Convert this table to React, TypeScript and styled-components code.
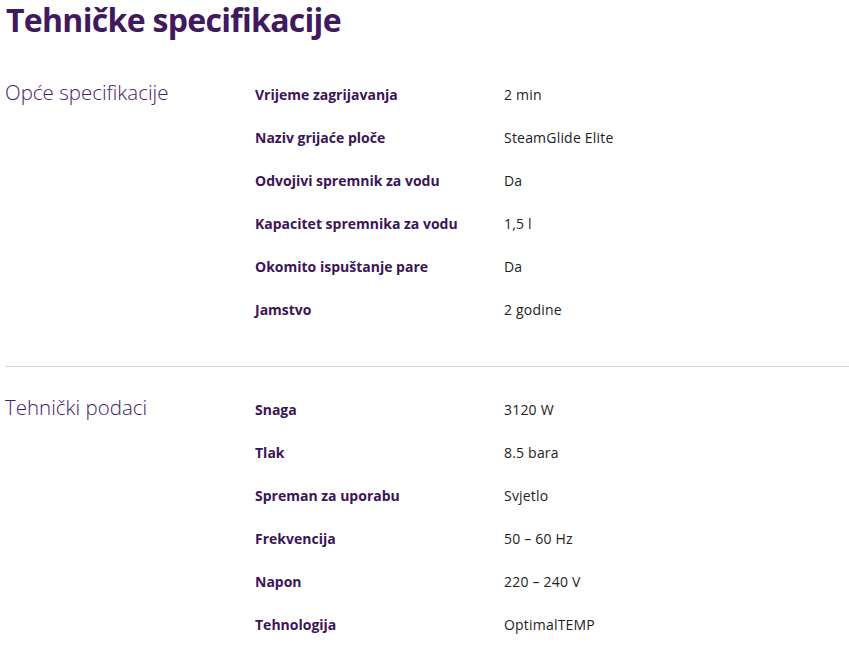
import React from 'react';
import styled, { createGlobalStyle } from 'styled-components';

const GlobalStyle = createGlobalStyle`
  html, body {
    margin: 0;
    padding: 0;
    background: #fff;
  }
  body {
    font-family: "Open Sans", "Noto Sans", sans-serif;
  }
`;

const Page = styled.div`
  padding: 0 0 0 5px;
`;

const Title = styled.h1`
  margin: 0 0 12px;
  padding-left: 1px;
  font-size: 32px;
  line-height: 40px;
  font-weight: 700;
  letter-spacing: -0.7px;
  color: #411a5e;
`;

const Section = styled.section<{ $divider?: boolean }>`
  display: grid;
  grid-template-columns: 250px 249px 1fr;
  padding: ${(p) => (p.$divider ? '21px 0 0' : '21px 0 35px')};
  border-top: ${(p) => (p.$divider ? '1px solid #d6d6d6' : 'none')};
`;

const SectionName = styled.h2`
  margin: -2px 0 0;
  font-size: 20.5px;
  line-height: 43px;
  font-weight: 300;
  color: #45206a;
  white-space: nowrap;
`;

const Rows = styled.dl`
  grid-column: 2 / 4;
  display: grid;
  grid-template-columns: 249px 1fr;
  grid-auto-rows: 43px;
  margin: 0;
`;

const Label = styled.dt`
  display: flex;
  align-items: center;
  font-size: 14px;
  font-weight: 700;
  color: #3b1558;
`;

const Value = styled.dd`
  display: flex;
  align-items: center;
  margin: 0;
  font-size: 14px;
  letter-spacing: 0.2px;
  color: #222;
`;

type Spec = [string, string];

const groups: { name: string; specs: Spec[] }[] = [
  {
    name: 'Opće specifikacije',
    specs: [
      ['Vrijeme zagrijavanja', '2 min'],
      ['Naziv grijaće ploče', 'SteamGlide Elite'],
      ['Odvojivi spremnik za vodu', 'Da'],
      ['Kapacitet spremnika za vodu', '1,5 l'],
      ['Okomito ispuštanje pare', 'Da'],
      ['Jamstvo', '2 godine'],
    ],
  },
  {
    name: 'Tehnički podaci',
    specs: [
      ['Snaga', '3120 W'],
      ['Tlak', '8.5 bara'],
      ['Spreman za uporabu', 'Svjetlo'],
      ['Frekvencija', '50 – 60 Hz'],
      ['Napon', '220 – 240 V'],
      ['Tehnologija', 'OptimalTEMP'],
    ],
  },
];

export default function App() {
  return (
    <Page>
      <GlobalStyle />
      <Title>Tehničke specifikacije</Title>
      {groups.map((g, i) => (
        <Section key={g.name} $divider={i > 0}>
          <SectionName>{g.name}</SectionName>
          <Rows>
            {g.specs.map(([k, v]) => (
              <React.Fragment key={k}>
                <Label>{k}</Label>
                <Value>{v}</Value>
              </React.Fragment>
            ))}
          </Rows>
        </Section>
      ))}
    </Page>
  );
}
